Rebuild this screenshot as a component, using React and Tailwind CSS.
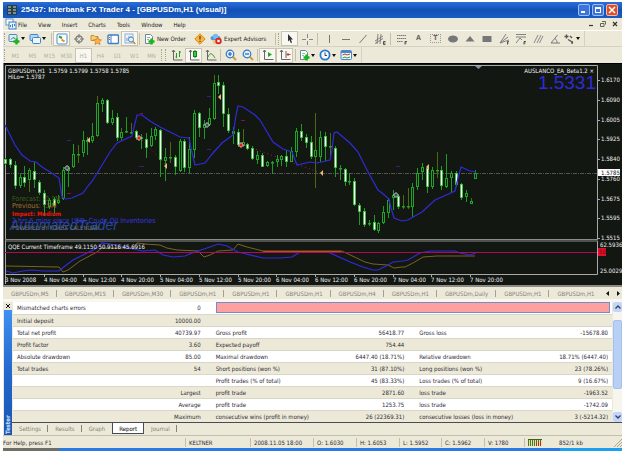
import clsx from "clsx";

const MENU = ["File", "View", "Insert", "Charts", "Tools", "Window", "Help"];
const PERIODS = ["M1", "M5", "M15", "M30", "H1", "H4", "D1", "W1", "MN"];
const CHART_TABS = ["M5", "M15", "M30", "H1", "H1", "H1", "H4", "H1", "Daily", "H1", "H1"];
const TESTER_TABS = ["Settings", "Results", "Graph", "Report", "Journal"];

const REPORT = [
  ["Initial deposit", "10000.00", "", "", "", ""],
  ["Total net profit", "40739.97", "Gross profit", "56418.77", "Gross loss", "-15678.80"],
  ["Profit factor", "3.60", "Expected payoff", "754.44", "", ""],
  ["Absolute drawdown", "85.00", "Maximal drawdown", "6447.40 (18.71%)", "Relative drawdown", "18.71% (6447.40)"],
  ["Total trades", "54", "Short positions (won %)", "31 (87.10%)", "Long positions (won %)", "23 (78.26%)"],
  ["", "", "Profit trades (% of total)", "45 (83.33%)", "Loss trades (% of total)", "9 (16.67%)"],
  ["", "Largest", "profit trade", "2871.60", "loss trade", "-1963.52"],
  ["", "Average", "profit trade", "1253.75", "loss trade", "-1742.09"],
  ["", "Maximum", "consecutive wins (profit in money)", "26 (22369.31)", "consecutive losses (loss in money)", "3 (-5214.32)"],
];

// wick top, wick bottom, body top, body bottom, bearish
const CANDLES = [
  [158, 165, 159, 164, 1], [158, 168, 159, 165, 1], [161, 189, 165, 186, 1], [174, 188, 177, 186, 0],
  [166, 187, 177, 183, 1], [168, 192, 170, 180, 0], [162, 188, 171, 180, 1], [180, 195, 182, 193, 1],
  [190, 216, 193, 205, 1], [198, 209, 200, 207, 0], [197, 214, 199, 206, 1], [195, 204, 200, 203, 0],
  [167, 200, 170, 199, 0], [166, 187, 168, 171, 0], [144, 168, 154, 167, 0], [145, 163, 154, 155, 0],
  [131, 157, 140, 153, 0], [137, 155, 140, 142, 0], [123, 143, 136, 141, 0], [96, 137, 103, 136, 0],
  [98, 112, 100, 104, 0], [99, 124, 100, 123, 1], [110, 125, 118, 123, 0], [113, 141, 117, 138, 1],
  [128, 141, 132, 138, 0], [117, 133, 131, 132, 0], [123, 134, 132, 133, 0], [130, 140, 131, 138, 1],
  [134, 149, 137, 139, 0], [133, 158, 139, 148, 1], [128, 147, 136, 146, 0], [127, 140, 129, 136, 0],
  [129, 177, 130, 160, 1], [148, 181, 157, 161, 0], [142, 163, 157, 158, 0], [155, 175, 157, 167, 1],
  [139, 172, 141, 171, 0], [139, 172, 141, 168, 1], [137, 173, 149, 168, 0], [110, 158, 113, 150, 0],
  [112, 137, 113, 128, 1], [120, 139, 124, 128, 0], [108, 126, 118, 125, 0], [75, 120, 83, 119, 0],
  [75, 94, 82, 86, 1], [82, 127, 85, 114, 1], [108, 133, 114, 131, 1], [127, 144, 131, 134, 0],
  [129, 147, 132, 145, 1], [129, 147, 142, 146, 0], [143, 150, 144, 149, 1], [146, 160, 148, 159, 1],
  [151, 164, 155, 160, 0], [153, 167, 155, 167, 1], [161, 167, 162, 166, 0], [161, 174, 162, 163, 0],
  [155, 167, 159, 162, 0], [155, 166, 156, 160, 0], [150, 167, 156, 162, 1], [147, 162, 151, 162, 0],
  [128, 157, 131, 152, 0], [124, 141, 131, 138, 1], [134, 148, 137, 143, 1], [136, 159, 142, 157, 1],
  [113, 188, 150, 157, 0], [131, 162, 137, 157, 0], [132, 161, 136, 147, 1], [133, 159, 146, 147, 0],
  [146, 177, 148, 168, 1], [165, 180, 168, 169, 0], [168, 186, 169, 182, 1], [173, 185, 181, 182, 0],
  [178, 206, 181, 205, 1], [203, 225, 205, 212, 1], [208, 227, 211, 225, 1], [220, 226, 223, 224, 0],
  [215, 231, 222, 230, 1], [222, 233, 223, 231, 0], [206, 224, 212, 223, 0], [198, 218, 200, 213, 0],
  [190, 210, 195, 198, 0], [195, 209, 196, 207, 1], [195, 209, 206, 207, 0], [188, 209, 206, 207, 0],
  [183, 217, 187, 207, 0], [168, 190, 173, 187, 0], [163, 180, 167, 172, 0], [166, 193, 168, 187, 1],
  [167, 189, 170, 187, 0], [152, 178, 170, 171, 0], [166, 190, 170, 186, 1], [154, 188, 178, 187, 0],
  [171, 193, 173, 178, 0], [171, 187, 173, 185, 1], [183, 200, 184, 198, 1], [190, 202, 193, 197, 0],
  [198, 204, 201, 204, 0], [170, 179, 173, 179, 0],
];
const OLIVE = [5, 15, 19, 24, 26, 34, 43, 49, 64, 67, 82, 83, 89, 96];

const MA_LINE =
  "5,125 10,135 15,145 22,155 30,161 36,162 42,167 50,172 59,178 60,184 62,197 66,199 72,198 83,193 88,186 93,180 110,152 117,143 132,136 137,115 142,115 150,121 160,127 170,132 180,137 189,138 191,148 195,165 200,164 205,163 213,153 222,143 233,135 236,115 238,106 243,107 255,115 260,120 267,132 273,142 283,149 292,152 297,165 310,162 317,163 330,160 332,150 334,133 337,132 350,143 358,152 367,170 378,190 382,193 389,199 391,208 394,218 402,221 408,220 413,217 422,212 435,200 455,191 457,182 461,167 470,171 476,172";
const QQE_FAST =
  "6,271 13,273 23,271 32,270 43,271 59,271 65,266 73,260 87,253 97,248 102,243 117,245 133,249 143,251 155,250 163,255 173,257 185,256 192,253 210,247 218,244 227,246 238,252 263,258 280,258 292,257 300,252 328,252 350,262 363,267 373,270 378,270 388,265 393,262 403,261 408,260 420,253 430,251 455,251 460,253 470,255 476,253";
const QQE_SLOW =
  "6,266 59,267 63,272 68,270 80,261 97,252 102,248 133,248 137,243 145,244 160,245 167,248 177,250 198,251 204,257 210,255 218,251 233,250 238,244 247,247 263,251 342,251 365,262 373,264 388,265 394,268 402,267 405,267 413,263 423,257 437,256 475,256";

const PRICES = [
  [80, "1.6170"], [100, "1.6090"], [120, "1.6005"], [139, "1.5925"], [159, "1.5840"],
  [179, "1.5760"], [199, "1.5675"], [218, "1.5595"], [238, "1.5515"],
];
const TIMES = [
  "3 Nov 2008", "4 Nov 04:00", "4 Nov 12:00", "4 Nov 20:00", "5 Nov 04:00", "5 Nov 12:00", "5 Nov 20:00",
  "6 Nov 04:00", "6 Nov 12:00", "6 Nov 20:00", "7 Nov 04:00", "7 Nov 12:00", "7 Nov 20:00",
];

const GREEN_PLUS = <path d="M8.5 5.5v6M5.5 8.5h6" stroke="#15b61c" strokeWidth="2.4" />;
const SHEET = <path d="M2.5 1.5h5l2 2v7h-7z" fill="#fff" stroke="#6f8896" />;

const ICONS = {
  app: (
    <>
      <rect x="1" y="1" width="7" height="6" fill="#fff" stroke="#5b93cf" />
      <rect x="4" y="4" width="7" height="7" fill="#e6f1fc" stroke="#3f7fc4" />
      <path d="M5.500 9V7M7.500 9.500V6M9.500 8V6" stroke="#3f7fc4" />
    </>
  ),
  newChart: (
    <>
      <rect x="1" y="1.500" width="8" height="7" rx="1" fill="#dcebf8" stroke="#4a88c4" />
      <path d="M3 6.500l2-2 2 1" stroke="#3b7a3b" fill="none" />
      {GREEN_PLUS}
    </>
  ),
  profiles: (
    <>
      <rect x="1" y="1.500" width="8" height="6" rx="1" fill="#b9d9f3" stroke="#3e86c8" />
      <rect x="3.500" y="4.500" width="8" height="6" rx="1" fill="#eef6fd" stroke="#3e86c8" />
    </>
  ),
  market: (
    <>
      <rect x="1" y="1" width="10" height="10" rx="1" fill="#fff" stroke="#4d8fce" />
      <path d="M3 3.500l3 1.500" stroke="#32a032" strokeWidth="2" />
      <path d="M5.500 6.500l3 2" stroke="#e3912b" strokeWidth="2" />
    </>
  ),
  crosshair: (
    <>
      <circle cx="6" cy="6" r="3.200" fill="none" stroke="#777" strokeWidth="1.200" />
      <path d="M6 1v4M6 7v4M1 6h4M7 6h4" stroke="#777" />
    </>
  ),
  favorites: (
    <>
      <path d="M1 2.500h3l1 1h3v4H1z" fill="#f7ce70" stroke="#c98f2c" />
      <path d="M7.500 4l1.200 2.500 2.800.3-2 2 .5 2.700-2.500-1.300L5 11.500l.5-2.700-2-2 2.800-.3z" fill="#f9b24c" stroke="#d4761c" strokeWidth=".7" />
    </>
  ),
  terminal: (
    <>
      <rect x="1" y="2" width="10.500" height="8.500" rx="1" fill="#fff" stroke="#3b7fc6" strokeWidth="1.400" />
      <path d="M4 2v8" stroke="#3b7fc6" />
      <path d="M2 4.500h1M2 6.500h1" stroke="#cc4433" />
    </>
  ),
  tester: (
    <>
      <rect x="1" y="1" width="8" height="9" fill="#eaf3fb" stroke="#8fb0d4" />
      <path d="M3 8V5M5 8V3M7 6V3" stroke="#6b98c8" />
      <circle cx="7" cy="6.500" r="2.500" fill="#dff0ff" stroke="#5a88b8" />
      <path d="M9 8.500l2.300 2.500" stroke="#c98b2c" strokeWidth="1.600" />
    </>
  ),
  order: <>{SHEET}<path d="M4 4.500h3M4 6.500h2" stroke="#8aa" />{GREEN_PLUS}</>,
  warn: (
    <>
      <path d="M6 .8L11.200 6 6 11.200.8 6z" fill="#f6b544" stroke="#d48a1d" />
      <path d="M6 3v3.500M6 7.800v1.200" stroke="#7a4a08" strokeWidth="1.400" />
    </>
  ),
  expert: (
    <>
      <ellipse cx="5.500" cy="5" rx="5" ry="2.600" fill="#4b95da" />
      <circle cx="5.500" cy="3.500" r="2.700" fill="#7ab8ee" />
      <path d="M2.500 7h5l-1 4h-3z" fill="#f0c77b" />
      <circle cx="8.500" cy="8" r="3.200" fill="#d8261c" />
      <rect x="7.300" y="6.800" width="2.400" height="2.400" fill="#fff" />
    </>
  ),
  cursor: <path d="M4 1l5 5.500H6.800l1.300 3-1.300.6-1.300-3L4 8.500z" fill="#333" />,
  cross: <path d="M6.500 1v4M6.500 8v4M1 6.500h4M8 6.500h4" stroke="#888" />,
  vline: <path d="M6.500 2v8" stroke="#777" />,
  hline: <path d="M2 6.500h8" stroke="#777" />,
  trend: <path d="M2.500 10l7-8" stroke="#777" />,
  channel: (
    <>
      <path d="M1 8l8-5M1 10.500l8-5M4 1L3 11M7 1L6 11" stroke="#777" strokeWidth=".9" />
      <path d="M11.500 8.500H9.500v3h2M9.500 10h2" stroke="#333" strokeWidth=".8" fill="none" />
    </>
  ),
  fibo: (
    <>
      <path d="M1 2.500h9M1 5.500h9M1 8.500h6" stroke="#777" strokeDasharray="1.500 .5" />
      <path d="M11 8.500H9v3M9 10h1.500" stroke="#333" strokeWidth=".8" fill="none" />
    </>
  ),
  ellipse: <ellipse cx="6" cy="6" rx="5" ry="3.500" fill="#777" />,
  triangle: <path d="M6 3L10.500 8.500h-9z" fill="#777" />,
  rect: <rect x="1.500" y="3" width="9" height="6" rx=".5" fill="#777" />,
  fan: (
    <>
      <path d="M2 10L8 1M2 10l8-6M2 10l9-3" stroke="#777" strokeWidth=".9" />
      <path d="M11 8.500H9.500v3M9.500 10h1.200" stroke="#333" strokeWidth=".8" fill="none" />
    </>
  ),
  expansion: (
    <>
      <path d="M1 1.500h10M1 4h10M1 10l4-5 2 2" stroke="#777" strokeWidth=".9" fill="none" />
      <path d="M11 8.500H9v3M9 10h1.500" stroke="#333" strokeWidth=".8" fill="none" />
    </>
  ),
  pitch: <path d="M2 10l4-8M5 10l4-8M7.500 10l3.500-7" stroke="#888" />,
  angle: <path d="M8.500 2l-6.500 8h9M6 5.500c1.500 1 2 2.500 2 4.500" stroke="#777" fill="none" />,
  arrows: (
    <>
      <path d="M1.500 3.500h4M3.500 1.500v4M5 6.500l5 3" stroke="#555" strokeWidth="1.400" />
      <path d="M7 3l2 2M9 8v3" stroke="#555" strokeWidth="1.400" />
    </>
  ),
  bars: (
    <>
      <path d="M2.500 1v10h9M1 3l1.500-2L4 3" stroke="#666" fill="none" />
      <path d="M5.500 4v5M8.500 2v6M8.500 3h1.500M5.500 8H4.500" stroke="#22962a" />
    </>
  ),
  candles: (
    <>
      <path d="M2.500 1v10h9M1 3l1.500-2L4 3" stroke="#666" fill="none" />
      <rect x="5.500" y="2.500" width="3" height="5" fill="#2fd03b" stroke="#15801c" />
      <path d="M7 1v1.500M7 7.500V9" stroke="#15801c" />
    </>
  ),
  line: (
    <>
      <path d="M2.500 1v10h9M1 3l1.500-2L4 3" stroke="#666" fill="none" />
      <path d="M3 8c2-5 4-4 7 1" stroke="#2f9a36" fill="none" />
    </>
  ),
  zoomIn: (
    <>
      <path d="M7.500 7.500l3.500 3.500" stroke="#d29a3a" strokeWidth="2" />
      <circle cx="5" cy="5" r="3.800" fill="#dff0ff" stroke="#2f78c8" strokeWidth="1.200" />
      <path d="M5 3v4M3 5h4" stroke="#2463b0" strokeWidth="1.200" />
    </>
  ),
  zoomOut: (
    <>
      <path d="M7.500 7.500l3.500 3.500" stroke="#d29a3a" strokeWidth="2" />
      <circle cx="5" cy="5" r="3.800" fill="#dff0ff" stroke="#2f78c8" strokeWidth="1.200" />
      <path d="M3 5h4" stroke="#2463b0" strokeWidth="1.200" />
    </>
  ),
  scroll: (
    <>
      <path d="M2.500 1v9.500h9M1 3l1.500-2L4 3" stroke="#666" fill="none" />
      <path d="M6 3l4 2.500L6 8z" fill="#26a52d" />
    </>
  ),
  shift: (
    <>
      <path d="M2.500 1v9.500h9M1 3l1.500-2L4 3M7 2v7" stroke="#666" fill="none" />
      <path d="M11.500 5.500H8M9.500 4L8 5.500 9.500 7" stroke="#cc3a22" fill="none" />
    </>
  ),
  indicators: <>{SHEET}<path d="M4 4.500h3M4 6.500h2" stroke="#7c9" />{GREEN_PLUS}</>,
  clock: (
    <>
      <circle cx="6" cy="6" r="4.600" fill="#f4faff" stroke="#2e78cc" strokeWidth="1.800" />
      <path d="M6 3.500V6.500h2" stroke="#345" fill="none" />
    </>
  ),
  template: (
    <>
      <rect x="1" y="1.500" width="10.500" height="9" rx="1" fill="#f2f8fe" stroke="#4b87c4" />
      <path d="M1 3h10" stroke="#4b87c4" strokeWidth="2" />
      <path d="M2.500 6l2.500-1 2 1 3-1" stroke="#b33" fill="none" />
      <path d="M2.500 9l2.500-1 2 1 3-1" stroke="#393" fill="none" />
    </>
  ),
};

function Icon({ name }) {
  return (
    <svg viewBox="0 0 12 12" className="h-3 w-3 shrink-0" fill="none" aria-hidden="true">
      {ICONS[name]}
    </svg>
  );
}

function Tool({ icon, label, active, drop, children }) {
  return (
    <button
      type="button"
      aria-label={label}
      className={clsx(
        "flex h-[15px] shrink-0 items-center",
        drop ? "w-[21px] gap-px" : "w-[17px] justify-center",
        active && "border border-[#c9c5b2] bg-[#f8f7f1]"
      )}
    >
      {icon && <Icon name={icon} />}
      {children}
      {drop && (
        <svg viewBox="0 0 4 3" className="h-[3px] w-1" aria-hidden="true">
          <path d="M0 0h4L2 3z" fill="#111" />
        </svg>
      )}
    </button>
  );
}

function Divider() {
  return <div className="mx-px h-3 w-px shrink-0 bg-[#c3bfad]" />;
}

function WideDivider() {
  return <div className="mx-[2px] h-3 w-px shrink-0 bg-[#c3bfad]" />;
}

function Grip() {
  return <div className="mx-px h-3 w-[2px] shrink-0 border-l border-dotted border-[#a5a190]" />;
}

function TitleBar() {
  return (
    <header className="flex h-4 items-center gap-1 bg-linear-to-b from-[#2a6fdc] via-[#1250b4] to-[#1a5cc4] pr-1 pl-1">
      <svg viewBox="0 0 10 10" className="h-2.5 w-2.5" aria-hidden="true">
        <rect width="10" height="10" fill="#2c3c48" />
        <path d="M1 2h3M6 2h3M1 5h3M6 5h3M1 8h3M6 8h3" stroke="#8fae9a" strokeWidth="1.500" />
      </svg>
      <h1 className="flex-1 font-['Liberation_Sans'] text-[8px] leading-[10px] font-bold whitespace-pre text-white">
        25437: Interbank FX Trader 4 - [GBPUSDm,H1 (visual)]
      </h1>
      <div className="flex gap-[2px]">
        <button type="button" aria-label="Minimize" className="flex h-3 w-3 items-end rounded-xs border border-[#9dbdf2] bg-[#3b74dd] p-[2px]">
          <span className="h-[2px] w-1 bg-white" />
        </button>
        <button type="button" aria-label="Restore" className="flex h-3 w-3 rounded-xs border border-[#9dbdf2] bg-[#3b74dd] p-[2px]">
          <span className="h-full w-full border border-t-2 border-white" />
        </button>
        <button type="button" aria-label="Close" className="flex h-3 w-3 items-center justify-center rounded-xs border border-[#f0b7a4] bg-[#d9502c]">
          <svg viewBox="0 0 8 8" className="h-2 w-2" aria-hidden="true">
            <path d="M1 1l6 6M7 1L1 7" stroke="#fff" strokeWidth="1.500" />
          </svg>
        </button>
      </div>
    </header>
  );
}

function MenuBar() {
  return (
    <nav className="flex h-[13px] items-center border-b border-white pr-1 pl-[2px]">
      <Icon name="app" />
      <div className="flex flex-1 gap-[11px] pl-px">
        {MENU.map((m) => (
          <button key={m} type="button">{m}</button>
        ))}
      </div>
      <div className="flex gap-[6px]">
        <button type="button" aria-label="Minimize chart">
          <svg viewBox="0 0 6 6" className="h-1.5 w-1.5"><path d="M1 4.500h4" stroke="#333" strokeWidth="1.200" /></svg>
        </button>
        <button type="button" aria-label="Restore chart">
          <svg viewBox="0 0 6 6" className="h-1.5 w-1.5">
            <path d="M2 .5h3.500v3M.5 2.500h3.500v3H.5z" stroke="#555" fill="none" strokeWidth=".9" />
          </svg>
        </button>
        <button type="button" aria-label="Close chart">
          <svg viewBox="0 0 6 6" className="h-1.5 w-1.5"><path d="M1 1l4 4M5 1L1 5" stroke="#333" strokeWidth="1.200" /></svg>
        </button>
      </div>
    </nav>
  );
}

function Toolbars() {
  return (
    <>
      <div className="flex h-4 items-center border-b border-[#d6d2c2]">
        <Grip />
        <div className="w-px shrink-0" />
        <Tool icon="newChart" label="New chart" drop />
        <Tool icon="profiles" label="Profiles" drop />
        <Divider />
        <Tool icon="market" label="Market watch" active />
        <Tool icon="crosshair" label="Data window" />
        <Tool icon="favorites" label="Navigator" />
        <Tool icon="terminal" label="Terminal" />
        <Tool icon="tester" label="Strategy tester" active />
        <Divider />
        <button type="button" className="flex w-[50px] shrink-0 items-center gap-[2px] pl-[2px] whitespace-nowrap">
          <Icon name="order" />
          New Order
        </button>
        <Tool icon="warn" label="MetaEditor" />
        <button type="button" className="flex w-[66px] shrink-0 items-center gap-[2px] pl-[2px] whitespace-nowrap">
          <Icon name="expert" />
          Expert Advisors
        </button>
        <Divider />
        <Grip />
        <Tool icon="cursor" label="Cursor" active />
        <Tool icon="cross" label="Crosshair" />
        <WideDivider />
        <Tool icon="vline" label="Vertical line" />
        <Tool icon="hline" label="Horizontal line" />
        <Tool icon="trend" label="Trendline" />
        <Tool icon="channel" label="Channel" />
        <WideDivider />
        <Tool icon="fibo" label="Fibonacci retracement" />
        <Tool label="Text"><span className="text-[7px] font-bold text-[#666]">A</span></Tool>
        <Tool label="Text label">
          <span className="border border-dotted border-[#999] px-[2px] text-[7px] leading-[7px] font-bold text-[#666]">T</span>
        </Tool>
        <Tool icon="ellipse" label="Ellipse" />
        <Tool icon="triangle" label="Triangle" />
        <Tool icon="rect" label="Rectangle" />
        <Tool icon="fan" label="Fibonacci fan" />
        <Tool icon="expansion" label="Fibonacci expansion" />
        <Tool icon="pitch" label="Pitchfork" />
        <Tool icon="angle" label="Gann line" />
        <Tool icon="arrows" label="Arrows" drop />
        <div className="h-full w-px bg-[#d6d2c2]" />
      </div>
      <div className="flex h-4 items-center">
        <Grip />
        {PERIODS.map((p) => (
          <Tool key={p} label={p} active={p === "H1"}>
            <span className="text-[#b5b1a2]">{p}</span>
          </Tool>
        ))}
        <Grip />
        <Grip />
        <Tool icon="bars" label="Bar chart" />
        <Tool icon="candles" label="Candlesticks" active />
        <Tool icon="line" label="Line chart" />
        <Divider />
        <Tool icon="zoomIn" label="Zoom in" />
        <Tool icon="zoomOut" label="Zoom out" />
        <Divider />
        <Tool icon="scroll" label="Auto scroll" active />
        <Tool icon="shift" label="Chart shift" active />
        <WideDivider />
        <Tool icon="indicators" label="Indicators" drop />
        <Tool icon="clock" label="Periods" drop />
        <Tool icon="template" label="Templates" drop />
        <div className="h-full w-px bg-[#d6d2c2]" />
      </div>
    </>
  );
}

function Candle({ index, data }) {
  const [high, low, top, bottom, bear] = data;
  const x = Math.round(5 + index * 4.85);
  return (
    <g>
      <rect x={x} y={high} width="1" height={low - high} fill={OLIVE.includes(index) ? "#4b6a10" : "#1f9a24"} />
      <rect
        x={x - 0.5}
        y={top + 0.5}
        width="2"
        height={Math.max(bottom - top - 1, 0.5)}
        fill={bear ? "#fff" : "#0f1a10"}
        stroke={bear ? "#35c93a" : "#1fa525"}
        strokeWidth={bear ? 0.8 : 1}
      />
    </g>
  );
}

function Arrow({ x, y }) {
  return <path d={`M${x - 2} ${y}l3-3v6z`} fill="#e8b878" />;
}

function Deal({ x, y, fill }) {
  return <path d={`M${x - 2.5} ${y}l2.5-2.5 2.5 2.500-2.500 2.500z`} fill={fill} stroke="#ddd" strokeWidth=".9" />;
}

function Chart() {
  return (
    <svg viewBox="3 63 619 222" className="block h-auto w-full" role="img" aria-label="GBPUSDm H1 chart">
      <rect x="3" y="63" width="619" height="222" fill="#131712" />
      <path d="M3 63.500h619" stroke="#000" />
      <path d="M3.500 63v222" stroke="#777" />
      <path d="M5.500 284V65.500H597.500V239M597.500 241V274.500H5" stroke="#a9a9a9" fill="none" />
      <path d="M5 239.500h593M5 241h593" stroke="#8b8b8b" />
      <path d="M6 173.500h591" stroke="#565650" strokeDasharray="4 1 1 1" />

      <g stroke="#b0105a" strokeDasharray="1 3">
        <path d="M142 140l25 26" />
        <path d="M241 144l80 29" />
      </g>
      <g stroke="#3a1f78">
        <path d="M67 140.500h4M139 166.500h5M207 96.500h4M207 149.500h4M396 166.500h4" />
        <path d="M241 120.500h4M140 113.500h3M67 193.500h4" stroke="#8a0d50" />
      </g>
      {CANDLES.map((c, i) => (
        <Candle key={i} index={i} data={c} />
      ))}
      <polyline points={MA_LINE} stroke="#302bd8" strokeWidth="1.200" fill="none" />
      <Deal x={67} y={168} fill="#2d5a4e" />
      <Deal x={139} y={138} fill="#f01818" />
      <Deal x={207} y={125} fill="#2d5a4e" />
      <Deal x={241} y={145} fill="#f01818" />
      <Deal x={396} y={195} fill="#2d5a4e" />
      <Arrow x={89} y={140} />
      <Arrow x={166} y={166} />
      <Arrow x={220} y={97} />
      <Arrow x={322} y={173} />
      <Arrow x={428} y={167} />
      <path d="M475 66h7l-3.500 3z" fill="#8294a4" />

      <polyline points={QQE_SLOW} stroke="#7a6320" fill="none" />
      <polyline points={QQE_FAST} stroke="#302bd8" strokeWidth="1.200" fill="none" />
      <path d="M5 252.500h592" stroke="#b0085c" />
      <path d="M263 251.500h78" stroke="#c84a18" />

      <g fill="#f2f2f2" fontSize="6">
        <text x="8" y="73" xmlSpace="preserve">{"GBPUSDm,H1  1.5759 1.5799 1.5758 1.5785"}</text>
        <text x="8" y="79">HiLo= 1.5787</text>
        <text x="594" y="73" textAnchor="end" xmlSpace="preserve">{"AUSLANCO_EA_Beta1.2 ×"}</text>
        <text x="8" y="249">QQE Current Timeframe 49.1150 50.9116 45.6916</text>
        {PRICES.map(([y, p]) => (
          <text key={p} x="601" y={y + 2}>{p}</text>
        ))}
        <text x="600" y="247">62.5936</text>
        <text x="600" y="273">25.0029</text>
        {TIMES.map((t, i) => (
          <text key={t} x={Math.round(5 + i * 38.75)} y="282">{t}</text>
        ))}
      </g>
      {PRICES.map(([y]) => (
        <path key={y} d={`M598 ${y + 0.5}h2`} stroke="#a9a9a9" />
      ))}
      {TIMES.map((t, i) => (
        <path key={t} d={`M${Math.round(5 + i * 38.75)}.500 275v2`} stroke="#a9a9a9" />
      ))}
      <rect x="598" y="169" width="22" height="7" fill="#fff" />
      <text x="601" y="175" fontSize="6" fill="#111">1.5785</text>
      <rect x="598" y="248" width="8" height="8" fill="#e0102a" />
      <text x="599" y="254" fontSize="6" fill="#7a0016">50</text>
      <text x="596" y="89" textAnchor="end" fontSize="19" fill="#2f2ad6" className="font-['Liberation_Sans']">1.5331</text>

      <text x="10" y="230" fontSize="14" fontStyle="italic" fill="#24489c" className="font-['Liberation_Sans']">AutomatedTrader</text>
      <g fontSize="7">
        <text x="12" y="201" fill="#3f5f10">Forecast: -0.1M</text>
        <text x="12" y="208" fill="#a8702e">Previous: -.5M</text>
        <text x="12" y="216" fill="#f01414" fontWeight="bold" fontSize="6">Impact: Medium</text>
        <text x="12" y="223" fill="#3a36e0">2 hrs 5 mins since USD, Crude Oil Inventories</text>
        <text x="12" y="230" fontSize="6" fill="#70747c">POWERED BY FOREX CALENDAR</text>
      </g>
    </svg>
  );
}

function ChartTabs() {
  return (
    <div className="flex h-3.5 items-center border-t-2 border-[#8e8b84] pr-[2px] pl-px text-[#85827a]">
      <div className="flex flex-1 gap-px">
        {CHART_TABS.map((t, i) => (
          <button key={i} type="button" className="border-r border-[#a5a190] px-[7px] leading-[7px] last:border-r-0">
            GBPUSDm,{t}
          </button>
        ))}
      </div>
      <button type="button" aria-label="Scroll tabs left" className="px-1">
        <svg viewBox="0 0 3 5" className="h-[5px] w-[3px]"><path d="M3 0v5L0 2.500z" fill="#111" /></svg>
      </button>
      <button type="button" aria-label="Scroll tabs right" className="px-1">
        <svg viewBox="0 0 3 5" className="h-[5px] w-[3px]"><path d="M0 0v5l3-2.500z" fill="#111" /></svg>
      </button>
    </div>
  );
}

function ReportTable() {
  return (
    <table className="w-full table-fixed border-collapse text-[#2e2936]">
      <colgroup>
        <col className="w-[17%]" />
        <col className="w-[16%]" />
        <col className="w-[19%]" />
        <col className="w-[15%]" />
        <col className="w-[19%]" />
        <col className="w-[14%]" />
      </colgroup>
      <tbody>
        <tr className="h-3 bg-white">
          <td className="p-0 pl-1 whitespace-nowrap">Mismatched charts errors</td>
          <td className="p-0 pr-[10px] text-right">0</td>
          <td colSpan={4} className="p-0 pr-[2px] pl-[5px]">
            <div className="h-[11px] border border-[#6f8fc6] bg-[#ffa0a0]" />
          </td>
        </tr>
        {REPORT.map((row, r) => (
          <tr key={r} className="h-3 border-t border-[#d9d6c8] odd:bg-white even:bg-[#ece9d8]">
            {row.map((cell, c) => (
              <td
                key={c}
                className={clsx(
                  "p-0 whitespace-nowrap",
                  c === 0 && "pl-1",
                  (c === 2 || c === 4) && "pl-[5px]",
                  c % 2 === 1 && "text-right",
                  (c === 1 || c === 3) && "pr-[10px]",
                  c === 5 && "pr-1"
                )}
              >
                {cell}
              </td>
            ))}
          </tr>
        ))}
      </tbody>
    </table>
  );
}

function ScrollBar() {
  return (
    <div className="flex w-[9px] shrink-0 flex-col bg-[#f6f5ee]">
      <button type="button" aria-label="Scroll up" className="flex h-2.5 items-center justify-center rounded-xs bg-[#c3d5fd]">
        <svg viewBox="0 0 6 4" className="h-1 w-1.5"><path d="M.5 3.500L3 1l2.500 2.500" stroke="#345" strokeWidth="1.300" fill="none" /></svg>
      </button>
      <div className="flex flex-1 flex-col pt-2">
        <div className="h-3/4 rounded-xs border border-[#a5bdf0] bg-[#b9d0f6]" />
      </div>
      <button type="button" aria-label="Scroll down" className="flex h-2.5 items-center justify-center rounded-xs bg-[#c3d5fd]">
        <svg viewBox="0 0 6 4" className="h-1 w-1.5"><path d="M.5.500L3 3 5.500.500" stroke="#345" strokeWidth="1.300" fill="none" /></svg>
      </button>
    </div>
  );
}

function Tester() {
  return (
    <section className="flex border-t-3 border-[#f8f7f0] pl-px">
      <div className="flex w-2 shrink-0 flex-col">
        <button type="button" aria-label="Close tester" className="flex h-2 items-center justify-center">
          <svg viewBox="0 0 4 4" className="h-1 w-1"><path d="M0 0l4 4M4 0L0 4" stroke="#111" /></svg>
        </button>
        <div className="flex flex-1 justify-center bg-linear-to-b from-[#3f90f2] via-[#2368cc] to-[#1a56b4] text-[#cfe2fb]">
          <span className="rotate-180 pt-px leading-2 font-bold [writing-mode:vertical-rl]">Tester</span>
        </div>
      </div>
      <div className="min-w-0 flex-1">
        <div className="flex gap-px border-b border-[#4a4a52]">
          <div className="min-w-0 flex-1 pl-px">
            <ReportTable />
          </div>
          <ScrollBar />
        </div>
        <div className="flex h-3 items-start gap-px pl-px text-[#85827a]">
          {TESTER_TABS.map((t) => (
            <button
              key={t}
              type="button"
              className={clsx(
                "px-[6px]",
                t === "Report"
                  ? "h-[11px] border border-t-0 border-[#4a4a52] bg-white leading-[9px] text-black"
                  : "mt-[2px] leading-[7px]",
                t !== "Report" && t !== "Graph" && "border-r border-[#85827a]"
              )}
            >
              {t}
            </button>
          ))}
        </div>
      </div>
    </section>
  );
}

function StatusBar() {
  const cell = "border-l border-[#c3bfad] pl-[3px] whitespace-nowrap";
  return (
    <footer className="flex h-[13px] items-center border-t border-[#c3bfad] text-[#2e2936]">
      <div className="flex-1">For Help, press F1</div>
      <div className={clsx(cell, "w-[65px]")}>KELTNER</div>
      <div className={clsx(cell, "w-[63px]")}>2008.11.05 18:00</div>
      <div className={clsx(cell, "w-[43px]")}>O: 1.6030</div>
      <div className={clsx(cell, "w-[43px]")}>H: 1.6053</div>
      <div className={clsx(cell, "w-[42px]")}>L: 1.5952</div>
      <div className={clsx(cell, "w-[43px]")}>C: 1.5962</div>
      <div className={clsx(cell, "w-[40px]")}>V: 1780</div>
      <div className={clsx(cell, "flex w-[98px] items-center")}>
        <svg viewBox="0 0 14 7" className="h-[7px] w-3.5" aria-hidden="true">
          <rect width="14" height="7" fill="#dfe3b8" />
          <path d="M.5 0v7M2.500 0v7M4.500 0v7M6.500 0v7M8.500 0v4M10.500 0v3M12.500 0v2" stroke="#4f7a14" />
          <path d="M8.500 4v3M10.500 3v4M12.500 2v5" stroke="#c22a1a" />
          <path d="M0 .5h14" stroke="#4c5c18" />
        </svg>
        <span className="pl-[17px]">852/1 kb</span>
        <svg viewBox="0 0 8 8" className="ml-auto h-2 w-2 self-end" aria-hidden="true">
          <path d="M0 8L8 0M3 8l5-5M6 8l2-2" stroke="#aca890" />
        </svg>
      </div>
    </footer>
  );
}

export default function App() {
  return (
    <div className="bg-white pt-[2px] pr-[3px] pl-[3px] font-['DejaVu_Sans_Condensed','DejaVu_Sans',sans-serif] text-[6px] leading-[9px] text-[#222]">
      <div className="bg-[#ece9d8]">
        <TitleBar />
        <MenuBar />
        <Toolbars />
        <Chart />
        <ChartTabs />
        <Tester />
        <StatusBar />
        <div className="flex h-[3px] bg-[#2b7be4]">
          <div className="w-[9%] bg-[#6d6f68]" />
          <div className="ml-auto w-[10%] bg-[#1ca0f0]" />
        </div>
      </div>
    </div>
  );
}
